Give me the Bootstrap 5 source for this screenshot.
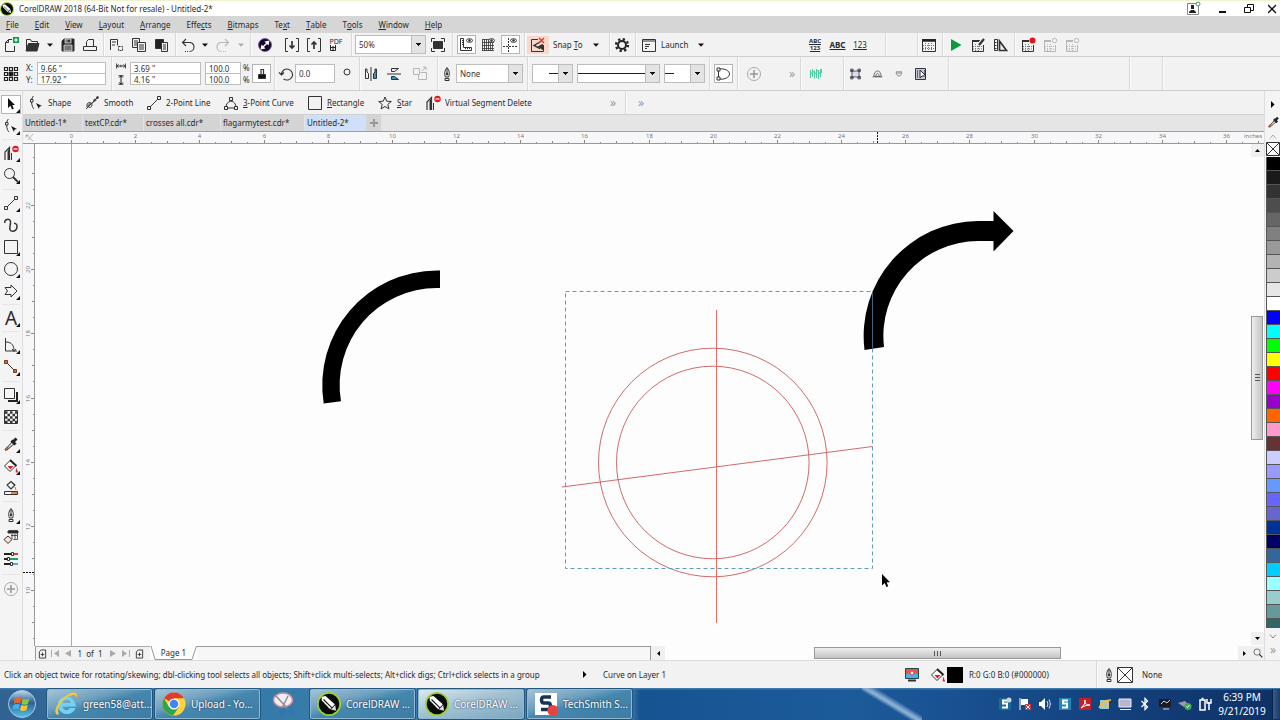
<!DOCTYPE html>
<html lang="en">
<head>
<meta charset="utf-8">
<meta name="viewport" content="width=device-width, initial-scale=1">
<title>CorelDRAW 2018 (64-Bit Not for resale) - Untitled-2*</title>
<link href="https://cdn.jsdelivr.net/npm/bootstrap@5.3.0/dist/css/bootstrap.min.css" rel="stylesheet">
<style>
  :root { --ink:#2a2a2a; --bar:#f2f2f2; --line:#cfcfcf; }
  body { font-family:"Noto Sans","Open Sans",sans-serif; font-size:8px; line-height:12px; color:var(--ink); background:#fdfdfd; overflow:hidden; }
  svg { display:block; flex:none; }
  button, a.menu-link { border:0; background:none; padding:0; margin:0; color:inherit; font-size:inherit; line-height:inherit; text-decoration:none; display:flex; align-items:center; white-space:nowrap; }
  .tool { justify-content:center; height:18px; }
  .off { opacity:.3; }
  .ico { width:16px; height:16px; fill:none; stroke:#333; stroke-width:1; }
  .ico-sm { width:13px; }
  .ico-xs { width:10px; height:10px; }
  .boxed { background:#fff; outline:1px solid #b5b5b5; outline-offset:-1px; width:19px; height:19px; justify-self:center; }
  .divider { width:1px; align-self:stretch; background:#d9d9d9; justify-self:center; box-shadow:1px 0 #fbfbfb; }
  .chev { font-size:12px; line-height:12px; color:#999; }
  .fit { min-width:0; min-height:0; }

  .title-row { height:16px; border-top:1px solid #f0f2cc; background:#fff; gap:5px; }
  .win-btns { gap:16px; padding-right:3px; }
  .win-btns button:last-child { margin-left:-3px; }
  .menu-row { height:17px; background:#d6d6d6; padding-left:6px; gap:16px; }
  .std-bar, .prop-bar, .fav-bar { display:grid; align-items:center; background:var(--bar); border-bottom:1px solid var(--line); }
  .std-bar { height:24px; grid-template-columns:21px 22px 14px 22px 22px 5px 22px 22px 23px 4px 22px 12px 24px 12px 7px 22px 5px 22px 22px 22px 8px 71px 24px 5px 22px 22px 22px 6px 22px 58px 4px 22px 4px 71px 96px 22px 23px 22px 28px 19px 22px 5px 22px 22px 22px 6px 22px 22px 22px 1fr; }
  .prop-bar { height:34px; grid-template-columns:22px 84px 10px 14px 71px 4px 46px 21px 5px 18px 40px 24px 0px 24px 22px 30px 4px 17px 67px 9px 41px 4px 83px 4px 41px 8px 20px 8px 26px 28px 11px 20px 18px 22px 22px 22px 22px 16px 181px 33px 1fr; }
  .fav-bar { height:24px; padding-left:5px; grid-template-columns:56px 62px 77px 84px 70px 48px 185px 10px 10px 22px 1fr; }
  .fav-bar button { gap:4px; }
  .pdf { font-size:7px; line-height:7px; flex-direction:column; }
  .abc-small { font-size:6px; line-height:7px; }
  .snap-off { background:#f6d9cc; }

  .field, .combo { border:1px solid #bdbdbd; background:#fff; border-radius:0; color:#333; padding:0 3px; font-size:8px; line-height:10px; min-width:0; width:100%; display:block; }
  .field { height:12px; }
  .field + .field { margin-top:-1px; }
  .field.tall { height:19px; }
  .scale { width:36px; }
  .pct { padding-left:2px; }
  .pick { position:relative; height:19px; width:100%; }
  .combo { height:19px; appearance:none; }
  .pick::after { content:""; position:absolute; right:0; top:0; width:15px; height:19px; border:1px solid #bdbdbd; background:linear-gradient(#111,#111) 4px 7px/5px 1px no-repeat, linear-gradient(#111,#111) 5px 8px/3px 1px no-repeat, linear-gradient(#111,#111) 6px 9px/1px 1px no-repeat, #e3e3e3; pointer-events:none; }
  .pick .sample { position:absolute; left:1px; right:15px; top:9px; height:1px; background:#222; pointer-events:none; }
  .pick .sample.short-end { left:17px; }
  .pick .sample.short-start { right:31px; }

  .toolbox { width:23px; flex:none; background:#f4f4f4; border-right:1px solid #dedede; display:grid; align-content:start; justify-items:center; padding-top:2px; grid-template-rows:22px 22px 5px 22px 22px 6px repeat(5,22px) 5px 22px 5px 22px 22px 6px 22px 22px 5px 22px 22px 22px 5px 22px 22px 22px 8px 22px; }
  .toolbox hr { margin:0; width:18px; border-top:1px solid #bbb; align-self:center; }
  .toolbox button { position:relative; width:20px; height:19px; justify-content:center; align-self:center; }
  .toolbox .fly::after { content:""; position:absolute; right:1px; bottom:1px; border:2px solid; border-color:transparent #111 #111 transparent; }
  .toolbox .letter { font-size:19px; }

  .doc-tabs { height:17px; background:#e5e5e5; border-bottom:1px solid #6aafe0; display:grid; grid-template-columns:60px 61px 77px 84px 61px 16px 1fr; }
  .doc-tabs button { height:16px; padding-left:2px; background:#d4d4d4; border-right:1px solid #e3e3e3; }
  .doc-tabs .on { background:#cfe0f8; border-color:#cfe0f8; }
  .doc-tabs .add { justify-content:center; padding:0; }
  .h-ruler { height:12px; background:#f7f7f9; border-bottom:1px solid #999; }
  .v-ruler { width:12px; flex:none; background:#f7f7f9; border-right:1px solid #999; }
  .ruler-num { font-size:6px; fill:#777; stroke:none; }
  .artboard { background:#fdfdfd; min-width:0; }
  .v-scroll { width:13px; flex:none; display:grid; grid-template-rows:13px 159fr 124px 193fr 13px; padding-bottom:1px; }
  .v-scroll button, .sq { background:#f0f0f0; justify-content:center; }
  .thumb-v { background:linear-gradient(90deg,#eee,#c4c4c4); border:1px solid #999; margin:0 1px 0 0; }
  .thumb-h { background:linear-gradient(#eee,#c4c4c4); border:1px solid #999; height:12px; margin-top:1px; }
  .bottom-row { height:14px; background:#fdfdfd; display:grid; grid-template-columns:12px 115px 47px 454px 14px 149fr 247px 178fr 13px 13px; }
  .corner { background:#f7f7f9; }
  .page-nav { background:var(--bar); border-top:1px solid #aaa; display:grid; grid-template-columns:12px 14px 12px 32px 14px 12px 14px; align-items:center; justify-items:center; border-left:1px solid #999; }
  .strip { background:#f7f7f7; border-top:1px solid #999; border-right:1px solid #999; }

  .palette { width:16px; flex:none; background:#f4f4f4; border-left:1px solid #ddd; display:flex; flex-direction:column; align-items:stretch; padding:5px 0 0 1px; }
  .palette .swatch { height:14px; border:0 solid #555; border-width:0 0 1px 1px; display:block; }
  .palette .swatch:last-of-type { height:9px; }
  .palette .head { height:17px; justify-content:center; }
  .palette .head.low { height:12px; }
  .palette .foot { height:16px; justify-content:center; }

  .status-row { height:28px; background:var(--bar); border-top:1px solid #dcdcdc; display:grid; align-items:center; grid-template-columns:4px 575px 24px 301px 18px 8px 17px 18px 130px 2px 12px 17px 1fr; }
  .status-row > span { white-space:nowrap; }
  .chip { width:16px; height:16px; background:#000; }

  .task-row { height:32px; font-size:10px; color:#fff; background:linear-gradient(31deg, transparent 42%, #8fb2d4 49%, #7fa6cd 52%, transparent 60%) 862px 0/60px 32px no-repeat, linear-gradient(#3f78ac 0 1px,transparent 2px), linear-gradient(90deg,#316392 0,#347aa8 20%,#4b87ac 49%,#165391 50%,#1c5b9a 66%,#1a5495 72%,#123d77 90%,#0e3065 100%); display:grid; align-items:center; grid-template-columns:47px 105px 3px 105px 50px 105px 3px 106px 3px 105px 1fr 214px 60px 8px; }
  .task { height:30px; padding-left:6px; gap:5px; border:1px solid #8eb8d3; border-radius:2px; background:linear-gradient(165deg,#a5c3d6 0,#6fa0bf 35%,#4687ae 50%,#3c7ca5 100%); text-shadow:0 0 2px #123; box-shadow:0 0 0 1px #23567d; }
  .task.on { background:linear-gradient(165deg,#dce8ef 0,#a3c2d3 45%,#7aa6bf 100%); }
  .task svg { width:24px; height:24px; stroke:none; }
  .tray { display:grid; grid-template-columns:repeat(10,20px) 14px; align-items:center; }
  .tray svg { width:14px; height:14px; stroke:none; }
  .clock { text-align:center; line-height:14px; }
  .show-desk { height:30px; background:linear-gradient(90deg,#3b5c88,#173a6c); border-left:1px solid #0a2248; }
</style>
</head>
<body class="d-flex flex-column vh-100">

<svg width="0" height="0" class="position-absolute" aria-hidden="true">
  <defs>
    <symbol id="corel" viewBox="0 0 24 24"><circle cx="12" cy="12" r="12" fill="#9bd32e"/><circle cx="12" cy="12" r="10.3" fill="#0b0b0b"/><path d="M4.500 4.800l4-.8 9.300 8.200-4.600 5-8.400-8.700z" fill="#fff"/><path d="M18.200 13l.9 5.800-5.200-1.200z" fill="#ddd"/><path d="M6.500 7.500l8.500 8.300" stroke="#111" stroke-width="1.100"/></symbol>
    <symbol id="caret" viewBox="0 0 6 4"><path d="M0 .5h6L3 3.700z" fill="#111"/></symbol>
    <symbol id="new" viewBox="0 0 16 16"><path d="M9 2.500H5.500l-3 3v9h9V9M5.500 2.500v3h-3"/><path d="M10 0h6v6h-6z" fill="#0e9a4a" stroke="none"/><path d="M13 1v4M11 3h4" stroke="#fff"/></symbol>
    <symbol id="open" viewBox="0 0 16 16"><path d="M2.500 13.500v-11h4l1 2h6v3"/><path d="M4.500 6.500h10.500l-2 7.500H2z" fill="#333"/></symbol>
    <symbol id="save" viewBox="0 0 16 16"><path d="M2 4l2-2h10v12H2z" fill="#222"/><path d="M5 2h6v4H5zM4 8h8v6H4z" fill="#777" stroke="#eee" stroke-width=".7"/><path d="M8.500 3h1v2h-1z" fill="#222"/></symbol>
    <symbol id="print" viewBox="0 0 16 16"><path d="M4.500 9V4.500l2-2h5V9M1.500 9.500h13v4h-13z"/></symbol>
    <symbol id="cut" viewBox="0 0 16 16"><path d="M1.500 13V2.500h7v6M3 5h4M3 8h3"/><path d="M9.500 9.500h4v4h-4z" stroke-dasharray="2 1"/></symbol>
    <symbol id="copy" viewBox="0 0 16 16"><path d="M7 10.500H1.500v-9h7V5M3 4h4M3 6h3M3 8h3"/><path d="M6.500 5.500h8v9h-8zM8 8h5M8 10h5M8 12h5"/></symbol>
    <symbol id="paste" viewBox="0 0 16 16"><path d="M1.500 2.500h8v9h-8z" fill="#222"/><path d="M7.500 5.500h6v9h-6z" fill="#eee"/><path d="M9 8h3M9 10h3M9 12h3"/></symbol>
    <symbol id="undo" viewBox="0 0 16 16"><path d="M2.500 5.500h7a4.300 4.300 0 0 1 4.500 4.500c0 2.500-2 4.500-4.500 4.500M6 2L2.500 5.500 6 9" stroke-width="1.100"/><path d="M8 14.500H4" stroke-dasharray="1 1"/></symbol>
    <symbol id="redo" viewBox="0 0 16 16"><path d="M13.500 5.500h-7A4.300 4.300 0 0 0 2 10c0 2.500 2 4.500 4.500 4.500M10 2l3.500 3.500L10 9" stroke-width="1.100"/><path d="M8 14.500h4" stroke-dasharray="1 1"/></symbol>
    <symbol id="connect" viewBox="0 0 16 16"><circle cx="8" cy="8" r="6.500" fill="#150b28" stroke="#7a4bb0" stroke-width=".8"/><path d="M12.500 3.500l-1 5-4-4zM3.500 12.500l1-5 4 4z" fill="#fff" stroke="none"/><path d="M5.500 10.500l5-5" stroke="#fff" stroke-width="1.500"/></symbol>
    <symbol id="import" viewBox="0 0 16 16"><path d="M4 1.500H1.500v13H4M12 1.500h2.500v13H12"/><path d="M8 4v7M5.500 8.500L8 11l2.500-2.500" stroke-width="1.700"/></symbol>
    <symbol id="export" viewBox="0 0 16 16"><path d="M4 1.500H1.500v13H4M12 1.500h2.500v13H12"/><path d="M8 12V5M5.500 7.500L8 5l2.500 2.500" stroke-width="1.700"/></symbol>
    <symbol id="full" viewBox="0 0 16 16"><path d="M3.500 4.500h9v7h-9z" fill="#333"/><path d="M1.500 5V1.500H5M11 1.500h3.500V5M14.500 11v3.500H11M5 14.500H1.500V11"/></symbol>
    <symbol id="eye" viewBox="0 0 16 16"><ellipse cx="11.500" cy="3.500" rx="3" ry="1.800" fill="#fff"/><circle cx="11.500" cy="3.500" r=".8" fill="#333"/></symbol>
    <symbol id="rulers" viewBox="0 0 16 16"><path d="M2.500 1.500h3v9h8v3h-11zM4 3.500h1M4 5.500h1M4 7.500h1M7.500 11v1M9.500 11v1M11.500 11v1"/><use href="#eye"/></symbol>
    <symbol id="grid" viewBox="0 0 16 16"><path d="M2.500 2v12M4.500 2v12M6.500 2v12M8.500 2v12M10.500 2v12M12.500 2v12M14 2.500H2M14 5.500H2M14 8.500H2M14 11.500H2M14 13.500H2" stroke-width=".8"/><use href="#eye"/></symbol>
    <symbol id="guides" viewBox="0 0 16 16"><path d="M6.500 1v14M1 9.500h14" stroke-dasharray="2 1"/><use href="#eye"/></symbol>
    <symbol id="snapoff" viewBox="0 0 16 16"><path d="M8 2.500H1.500v12h12V8" /><path d="M10 5L4 8.500l6 3" stroke-width="1.400"/><path d="M12.500 7.500v5l-4-3z" fill="#333"/><path d="M9 1l5 5M14 1L9 6" stroke="#e0342b" stroke-width="1.400"/></symbol>
    <symbol id="gear" viewBox="0 0 16 16"><circle cx="8" cy="8" r="4" stroke="#222" stroke-width="2"/><circle cx="8" cy="8" r="6" stroke="#222" stroke-width="2.200" stroke-dasharray="2.300 2.410"/></symbol>
    <symbol id="launch" viewBox="0 0 16 16"><path d="M1.500 2.500h13v12h-13zM1.500 4h13M4 7.500h5M4 9.500h4M4 11.500h2"/></symbol>
    <symbol id="table" viewBox="0 0 16 16"><path d="M1.500 2.500h13v12h-13z"/><path d="M1 3.500h14" stroke-width="2.500" stroke="#222"/><path d="M4.500 6v8M7.500 6v8M10.500 6v8M2 8.500h12M2 11.500h12" stroke="#777" stroke-dasharray="1 1"/></symbol>
    <symbol id="play" viewBox="0 0 16 16"><path d="M3 2l10.500 6L3 14z" fill="#0a9b3f" stroke="none"/></symbol>
    <symbol id="script" viewBox="0 0 16 16"><path d="M10 3.500H2.500v11h11V8"/><path d="M2 4h7" stroke-width="2"/><path d="M9 8l5-6" stroke-width="2.200"/><path d="M5.500 7v7M8.500 9v5M3 9.500h10M3 12h10" stroke="#777" stroke-dasharray="1 1"/></symbol>
    <symbol id="angle" viewBox="0 0 16 16"><path d="M2.500 2.500h3v11h-3zM3 5.500h1.500M3 8.500h1.500M3 11.500h1.500"/><path d="M7.500 4v9.500h7z" stroke-width="1.700"/></symbol>
    <symbol id="rec" viewBox="0 0 16 16"><path d="M9 3.500H2.500v11h11V8"/><path d="M2 4h7" stroke-width="2"/><path d="M5.500 7v7M8.500 7v7M3 9.500h10M3 12h10" stroke="#777" stroke-dasharray="1 1"/><circle cx="12.500" cy="3.500" r="3" fill="#e9101a" stroke="none"/></symbol>
    <symbol id="rec2" viewBox="0 0 16 16"><path d="M9 3.500H2.500v11h11V8"/><path d="M2 4h7" stroke-width="2"/><path d="M5.500 7v7M8.500 7v7M3 9.500h10M3 12h10" stroke-dasharray="1 1"/><circle cx="12.500" cy="3.500" r="2.200"/></symbol>
    <symbol id="anchor" viewBox="0 0 16 16"><path d="M1.500 1.500h3v3h-3zM6.500 1.500h3v3h-3zM11.500 1.500h3v3h-3zM1.500 6.500h3v3h-3zM11.500 6.500h3v3h-3zM1.500 11.500h3v3h-3zM6.500 11.500h3v3h-3zM11.500 11.500h3v3h-3z" stroke="#222" stroke-width="1.200"/><path d="M6 6h4v4H6z" fill="#111"/></symbol>
    <symbol id="width" viewBox="0 0 12 8"><path d="M.5 1v6M11.500 1v6M1 4h10M3 2L1 4l2 2M9 2l2 2-2 2M6 2.500v3" stroke="#222"/></symbol>
    <symbol id="height" viewBox="0 0 12 12"><path d="M3 1h6M3 11h6M6 1v10M4 3l2-2 2 2M4 9l2 2 2-2" stroke="#222" stroke-width="1.200"/></symbol>
    <symbol id="lock" viewBox="0 0 16 16"><path d="M7 8V3.500h2.500V8" stroke-width="1.200"/><path d="M4.500 8.500h7v4h-7z" fill="#111"/></symbol>
    <symbol id="rotate" viewBox="0 0 16 16"><path d="M3.500 8.500a5.500 5.500 0 1 1 2 4.300M1 6.500l2.500 2.500L6 6.500" stroke-width="1.100"/></symbol>
    <symbol id="mirror" viewBox="0 0 16 16"><path d="M2.500 3v9.500h3v-5l-1.500-1.500V3zM8 1v14"/><path d="M13.500 3v9.500h-3v-5l1.500-1.500V3z" fill="#2f93bf"/></symbol>
    <symbol id="flip" viewBox="0 0 16 16"><path d="M12.500 2.500H5.500v3h3zM1 8h14"/><path d="M12.500 13.500H5.500v-3h3z" fill="#2f93bf"/></symbol>
    <symbol id="order" viewBox="0 0 16 16"><path d="M1.500 2.500h6v6h-6zM6.500 8.500v5h8v-7h-6M10 5l4-4M11 1h3v3"/></symbol>
    <symbol id="pen" viewBox="0 0 16 16"><path d="M8 1.500C5.500 5 5 7.500 6.500 11h3C11 7.500 10.500 5 8 1.500zM6 12.500h4v2H6zM8 2v6"/><circle cx="8" cy="8" r="1" fill="#333"/></symbol>
    <symbol id="closed" viewBox="0 0 16 16"><path d="M3.500 3v10M3.500 3C10 2 14.500 5 14.500 8S10 14 3.500 13"/><path d="M2 2h3v3H2zM2 11h3v3H2z" fill="#fff"/></symbol>
    <symbol id="plus" viewBox="0 0 16 16"><circle cx="8" cy="8" r="6.500" stroke="#aaa"/><path d="M8 4v8M4 8h8" stroke="#999" stroke-width="1.600"/></symbol>
    <symbol id="scribble" viewBox="0 0 16 16"><path d="M2.500 4v8M4.500 3v8M6.500 4.500v8M8.500 3v9M10.500 5v8M12.500 3v8M13.500 3v4M2 9l3-4 2 3 3-4 2 4" stroke="#4fcda2" stroke-width="1"/></symbol>
    <symbol id="env" viewBox="0 0 16 16"><path d="M3 3c3 2 6 2 10 0-1 4-1 6 0 10-4-2-7-2-10 0 1-4 1-6 0-10z" fill="#dde" stroke="#334"/><path d="M2 2h3v3H2zM11 2h3v3h-3zM2 11h3v3H2zM11 11h3v3h-3z" stroke="#334"/></symbol>
    <symbol id="bell" viewBox="0 0 16 16"><path d="M3.500 11c0-9 9-9 9 0zM6 11c0-5 4-5 4 0M2 11.500h12" stroke="#555"/></symbol>
    <symbol id="cup" viewBox="0 0 16 16"><path d="M3.500 4.500h9c0 9-9 9-9 0M5 6.500h6" stroke="#555"/></symbol>
    <symbol id="pasteobj" viewBox="0 0 16 16"><path d="M2.500 2.500h10v11h-10z" fill="#c6c8d6" stroke="#334"/><path d="M7 4v8l2-2h4z" fill="#fff" stroke="#223"/><path d="M4.500 4v8M11.500 4v4" stroke="#667"/></symbol>
    <symbol id="arrowcur" viewBox="0 0 16 16"><path d="M5 2v10l2.500-2.300L9 13.500l1.800-.8L9.300 9H12z" fill="#111" stroke="none"/></symbol>
    <symbol id="shape" viewBox="0 0 16 16"><path d="M5.500 1C3 3 3.500 8 4 10s1 3 2 4"/><path d="M2.500 4.500h2.500v2.500h-2.500z" fill="#fff"/><path d="M8 8l6 3-2.500.6L11 14z" fill="#111" stroke="none"/></symbol>
    <symbol id="smooth" viewBox="0 0 16 16"><path d="M2 14L14 2M3 12c-1-6 5-5 5-2s-4 3-4 1c0-3 7-2 6-6"/><circle cx="13.500" cy="2.500" r="1"/><circle cx="11" cy="5" r="1"/></symbol>
    <symbol id="line" viewBox="0 0 16 16"><path d="M3 13L13 3"/><path d="M1.500 11.500h3v3h-3zM11.500 1.500h3v3h-3z" fill="#eee"/></symbol>
    <symbol id="curve3" viewBox="0 0 16 16"><path d="M3 13C3 4 13 4 13 13M3 13h10"/><path d="M6.500 2.500h3v3h-3zM1.500 11.500h3v3h-3zM11.500 11.500h3v3h-3z" fill="#eee"/></symbol>
    <symbol id="rect" viewBox="0 0 16 16"><path d="M1.500 1.500h13v13h-13z"/></symbol>
    <symbol id="star" viewBox="0 0 16 16"><path d="M8 2l1.700 4.200 4.600.3-3.500 2.900 1.100 4.500L8 11.500l-3.900 2.400 1.100-4.500L1.700 6.500l4.600-.3z"/></symbol>
    <symbol id="vsd" viewBox="0 0 16 16"><path d="M2 15V7l4.500-4.500V15" stroke-width="1.200"/><path d="M4.500 6L7 3v12H4.500z" fill="#333" stroke="none"/><path d="M8.500 8v7"/><circle cx="12.500" cy="4" r="3.200" fill="#e01b22" stroke="none"/><path d="M10.500 4h4" stroke="#fff" stroke-width="1.200"/></symbol>
    <symbol id="zoom" viewBox="0 0 16 16"><circle cx="6.500" cy="6.500" r="5"/><path d="M10 10l5 5" stroke-width="1.800"/></symbol>
    <symbol id="free" viewBox="0 0 16 16"><path d="M2 6C.500 2.500 7 .500 7.500 4.500 8 8 4.500 14 9.500 14.200c5.500 0 6-8.200 1.500-8" stroke-width="1.500"/></symbol>
    <symbol id="ellipse" viewBox="0 0 16 16"><circle cx="8" cy="8" r="6.500"/></symbol>
    <symbol id="arrowshape" viewBox="0 0 16 16"><path d="M2 4.500h6V2l6 6-6 6v-2.500H2L4.500 8z"/></symbol>
    <symbol id="dim" viewBox="0 0 16 16"><path d="M2.500 1v13H14M3 5c6 0 8 4 8 9M9 12l2 2.500 2-2.500"/></symbol>
    <symbol id="conn" viewBox="0 0 16 16"><path d="M3 3l10 10"/><path d="M1.500 1.500h3v3h-3zM10.500 10.500h3v3h-3z" fill="#c96f36" stroke="#7b3b15"/></symbol>
    <symbol id="shadow" viewBox="0 0 16 16"><path d="M14 5v9H5" stroke-width="2" stroke="#222"/><path d="M1.500 1.500h10v10h-10z" fill="#f6f6f6"/></symbol>
    <symbol id="checker" viewBox="0 0 16 16"><path d="M1.500 1.500h13v13h-13z"/><path d="M2 3.500h12M2 8.500h12M2 13h12" stroke-width="2.500" stroke-dasharray="2.500 2.500"/><path d="M4.500 6h10M4.500 11h10" stroke-width="2.500" stroke-dasharray="2.500 2.500"/></symbol>
    <symbol id="dropper" viewBox="0 0 16 16"><path d="M2 14l7-8 2 2-7 6z" fill="#ddd"/><path d="M2 14l3-3" stroke="#b65a2a" stroke-width="2"/><path d="M8.500 4.500l4 4M10 6l3.500-3.500" stroke="#222" stroke-width="3"/></symbol>
    <symbol id="bucket" viewBox="0 0 16 16"><path d="M7 2.500l6 5-6 6-5.500-5.500z" fill="#fff"/><path d="M7 2l6.500 6" stroke="#222" stroke-width="2"/><path d="M4.500 8h6L7.300 11.500zM13 9.500l2.300 5h-2.600z" fill="#e0242e" stroke="none"/></symbol>
    <symbol id="smartfill" viewBox="0 0 16 16"><path d="M8 1.500l4 3.500-4 4-4-4zM9 2.500l3 3" stroke-width="1.100"/><path d="M1.500 11.500h13v3h-13z"/><path d="M8 12h6v2H8z" fill="#e08a4e" stroke="none"/><path d="M12 7l1 3" stroke="#d66"/></symbol>
    <symbol id="mesh" viewBox="0 0 16 16"><path d="M5.500 1.500h9v9h-4M9 5v5M12 5v5M8 6.500h6" stroke-width=".8"/><path d="M5 2h10v2H5z" fill="#222"/><path d="M5 7l4 3.500-4 4-4-4z" fill="#f4e6da"/></symbol>
    <symbol id="sliders" viewBox="0 0 16 16"><path d="M1 3h7M1 8h3M1 13h6" stroke-width="1.800" stroke="#222"/><path d="M11 3h4" stroke="#d23" stroke-width="1.800"/><path d="M7 8h8" stroke="#19914a" stroke-width="1.800"/><path d="M10 13h5" stroke="#38a4e0" stroke-width="1.800"/><path d="M8.500 1.500h2v3h-2zM4.500 6.500h2v3h-2zM7.500 11.500h2v3h-2z" fill="#fff"/></symbol>
    <symbol id="addpage" viewBox="0 0 10 10"><path d="M3.500.5h5v9h-7v-7zM3 5.500h4M5 3.500v4"/></symbol>
    <symbol id="xbox" viewBox="0 0 16 16"><path d="M.5.5h15v15H.5z" fill="#fff"/><path d="M1 1l14 14M15 1L1 15"/></symbol>
    <symbol id="screen" viewBox="0 0 16 16"><path d="M1.500 1.500h13v10h-13z" fill="#e2574c" stroke="#245"/><path d="M2 7h12v4H2z" fill="#49b3e6" stroke="none"/><circle cx="8" cy="6" r="2" fill="#fff" stroke="#e8443d"/><path d="M4 13.500h8" stroke-width="2"/></symbol>
    <linearGradient id="orb" x2="0" y2="1"><stop stop-color="#c3d9e8"/><stop offset=".45" stop-color="#2a5f90"/><stop offset="1" stop-color="#57c3ee"/></linearGradient>
  </defs>
</svg>

<header class="title-row d-flex align-items-center">
  <svg width="14" height="14" viewBox="0 0 24 24"><use href="#corel"/></svg>
  <span class="flex-fill">CorelDRAW 2018 (64-Bit Not for resale) - Untitled-2*</span>
  <div class="win-btns d-flex align-items-center">
    <button aria-label="Account"><svg class="ico" width="12" height="12" viewBox="0 0 16 16"><path d="M1.500 2.500h11v11h-11z" stroke="#888"/><path d="M5 4h3v4H5zM3 12v-1l2-2h3l2 2v1z" fill="#222" stroke="none"/><circle cx="12" cy="3" r="2" stroke="#3a9a7c" fill="#fff"/></svg></button>
    <button aria-label="Minimize"><svg width="10" height="12" stroke="#111" fill="none"><path d="M1 9h7" stroke-width="2"/></svg></button>
    <button aria-label="Restore"><svg width="11" height="12" stroke="#111" fill="none"><path d="M3.500 4V1.500h6v6H7M.5 4.500h6v5h-6z"/></svg></button>
    <button aria-label="Close"><svg width="9" height="12" stroke="#111" stroke-width="1.400" fill="none"><path d="M0 2l8 8M8 2L0 10"/></svg></button>
  </div>
</header>

<nav class="menu-row d-flex align-items-center">
  <a class="menu-link" href="#"><u>F</u>ile</a><a class="menu-link" href="#"><u>E</u>dit</a><a class="menu-link" href="#"><u>V</u>iew</a><a class="menu-link" href="#"><u>L</u>ayout</a><a class="menu-link" href="#"><u>A</u>rrange</a><a class="menu-link" href="#">Effe<u>c</u>ts</a><a class="menu-link" href="#"><u>B</u>itmaps</a><a class="menu-link" href="#">Te<u>x</u>t</a><a class="menu-link" href="#"><u>T</u>able</a><a class="menu-link" href="#">T<u>o</u>ols</a><a class="menu-link" href="#"><u>W</u>indow</a><a class="menu-link" href="#"><u>H</u>elp</a>
</nav>

<div class="std-bar" role="toolbar" aria-label="Standard">
  <button class="tool" aria-label="New"><svg class="ico"><use href="#new"/></svg></button>
  <button class="tool" aria-label="Open"><svg class="ico"><use href="#open"/></svg></button>
  <button class="tool" aria-label="Recent"><svg width="6" height="4"><use href="#caret"/></svg></button>
  <button class="tool" aria-label="Save"><svg class="ico"><use href="#save"/></svg></button>
  <button class="tool" aria-label="Print"><svg class="ico"><use href="#print"/></svg></button>
  <i class="divider"></i>
  <button class="tool" aria-label="Cut"><svg class="ico"><use href="#cut"/></svg></button>
  <button class="tool" aria-label="Copy"><svg class="ico"><use href="#copy"/></svg></button>
  <button class="tool" aria-label="Paste"><svg class="ico"><use href="#paste"/></svg></button>
  <i class="divider"></i>
  <button class="tool" aria-label="Undo"><svg class="ico"><use href="#undo"/></svg></button>
  <button class="tool" aria-label="Undo list"><svg width="6" height="4"><use href="#caret"/></svg></button>
  <button class="tool off" aria-label="Redo"><svg class="ico"><use href="#redo"/></svg></button>
  <button class="tool off" aria-label="Redo list"><svg width="6" height="4"><use href="#caret"/></svg></button>
  <i class="divider"></i>
  <button class="tool" aria-label="Content"><svg class="ico"><use href="#connect"/></svg></button>
  <i></i>
  <button class="tool" aria-label="Import"><svg class="ico"><use href="#import"/></svg></button>
  <button class="tool" aria-label="Export"><svg class="ico"><use href="#export"/></svg></button>
  <button class="tool pdf">PDF<svg width="12" height="6" fill="none" stroke="#222"><path d="M.5 0v5.500h5V0M1 2.500h4M3 1v4"/></svg></button>
  <i class="divider"></i>
  <div class="pick"><select class="combo" aria-label="Zoom level"><option>50%</option></select></div>
  <button class="tool" aria-label="Full screen"><svg class="ico"><use href="#full"/></svg></button>
  <i class="divider"></i>
  <button class="tool boxed" aria-label="Show rulers"><svg class="ico"><use href="#rulers"/></svg></button>
  <button class="tool" aria-label="Show grid"><svg class="ico"><use href="#grid"/></svg></button>
  <button class="tool boxed" aria-label="Show guidelines"><svg class="ico"><use href="#guides"/></svg></button>
  <i class="divider"></i>
  <button class="tool snap-off" aria-label="Snap off"><svg class="ico"><use href="#snapoff"/></svg></button>
  <button class="ps-1 pe-2 justify-content-between"><span>Snap <u>T</u>o</span><svg width="6" height="4"><use href="#caret"/></svg></button>
  <i class="divider"></i>
  <button class="tool" aria-label="Options"><svg class="ico"><use href="#gear"/></svg></button>
  <i class="divider"></i>
  <button class="ps-1 pe-1"><svg class="ico"><use href="#launch"/></svg><span class="ps-1 flex-fill text-start">Launch</span><svg width="6" height="4"><use href="#caret"/></svg></button>
  <i></i>
  <button class="tool abc-small text-decoration-underline fw-bold">ABC<br>123</button>
  <button class="tool text-decoration-underline fw-bold">ABC</button>
  <button class="tool text-decoration-underline">123</button>
  <i class="divider"></i>
  <i class="divider ms-auto"></i>
  <button class="tool" aria-label="Table"><svg class="ico"><use href="#table"/></svg></button>
  <i class="divider"></i>
  <button class="tool" aria-label="Run"><svg class="ico"><use href="#play"/></svg></button>
  <button class="tool" aria-label="Script editor"><svg class="ico"><use href="#script"/></svg></button>
  <button class="tool" aria-label="Design mode"><svg class="ico"><use href="#angle"/></svg></button>
  <i class="divider"></i>
  <button class="tool" aria-label="Record"><svg class="ico"><use href="#rec"/></svg></button>
  <button class="tool off" aria-label="Pause"><svg class="ico"><use href="#rec2"/></svg></button>
  <button class="tool off" aria-label="Stop"><svg class="ico"><use href="#rec2"/></svg></button>
</div>

<div class="prop-bar" role="toolbar" aria-label="Property bar">
  <button class="tool" aria-label="Object origin"><svg class="ico"><use href="#anchor"/></svg></button>
  <div class="d-flex align-items-center"><div class="ps-1 pe-1"><label class="d-block" for="px">X:</label><label class="d-block" for="py">Y:</label></div><div class="flex-fill"><input class="field" id="px" value='9.66 "'><input class="field" id="py" value='17.92 "'></div></div>
  <i class="divider"></i>
  <div><svg width="10" height="8" fill="none"><use href="#width"/></svg><svg class="mt-1" width="10" height="12" fill="none"><use href="#height"/></svg></div>
  <div><input class="field" aria-label="Width" value='3.69 "'><input class="field" aria-label="Height" value='4.16 "'></div>
  <i></i>
  <div class="d-flex align-items-center"><div class="scale"><input class="field" id="sx" value="100.0"><input class="field" id="sy" value="100.0"></div><div class="pct"><label class="d-block" for="sx">%</label><label class="d-block" for="sy">%</label></div></div>
  <button class="tool boxed" aria-label="Lock ratio"><svg class="ico"><use href="#lock"/></svg></button>
  <i class="divider"></i>
  <button class="tool" aria-label="Rotation"><svg class="ico"><use href="#rotate"/></svg></button>
  <input class="field tall" aria-label="Angle" value="0.0">
  <span><svg class="mx-auto mb-1" width="8" height="8" fill="none" stroke="#333"><circle cx="4" cy="4" r="3"/></svg></span>
  <i class="divider"></i>
  <button class="tool" aria-label="Mirror horizontally"><svg class="ico"><use href="#mirror"/></svg></button>
  <button class="tool" aria-label="Mirror vertically"><svg class="ico"><use href="#flip"/></svg></button>
  <button class="tool off" aria-label="Order"><svg class="ico"><use href="#order"/></svg></button>
  <i class="divider"></i>
  <svg class="ico"><use href="#pen"/></svg>
  <div class="pick"><select class="combo" aria-label="Outline width"><option>None</option></select></div>
  <i class="divider"></i>
  <div class="pick"><select class="combo" aria-label="Start arrowhead"></select><span class="sample short-end"></span></div>
  <i></i>
  <div class="pick"><select class="combo" aria-label="Line style"></select><span class="sample"></span></div>
  <i></i>
  <div class="pick"><select class="combo" aria-label="End arrowhead"></select><span class="sample short-start"></span></div>
  <i class="divider"></i>
  <button class="tool boxed" aria-label="Close curve"><svg class="ico"><use href="#closed"/></svg></button>
  <i class="divider"></i>
  <button class="tool" aria-label="Customize"><svg class="ico"><use href="#plus"/></svg></button>
  <span class="text-end chev">»</span>
  <i class="divider"></i>
  <button class="tool" aria-label="Scribble"><svg class="ico"><use href="#scribble"/></svg></button>
  <i class="divider ms-auto"></i>
  <button class="tool" aria-label="Envelope"><svg class="ico ico-sm"><use href="#env"/></svg></button>
  <button class="tool" aria-label="Bell"><svg class="ico ico-sm"><use href="#bell"/></svg></button>
  <button class="tool" aria-label="Cup"><svg class="ico ico-xs"><use href="#cup"/></svg></button>
  <button class="tool" aria-label="Paste inside"><svg class="ico"><use href="#pasteobj"/></svg></button>
  <i></i>
  <i class="divider me-auto"></i>
  <i class="divider me-auto"></i>
  <i class="divider me-auto"></i>
</div>

<div class="flex-fill d-flex fit">
  <aside class="toolbox" role="toolbar" aria-label="Toolbox">
    <button class="boxed fly" aria-label="Pick"><svg class="ico"><use href="#arrowcur"/></svg></button>
    <button class="fly" aria-label="Shape tool"><svg class="ico"><use href="#shape"/></svg></button>
    <hr>
    <button class="fly" aria-label="Segment delete"><svg class="ico"><use href="#vsd"/></svg></button>
    <button class="fly" aria-label="Zoom"><svg class="ico"><use href="#zoom"/></svg></button>
    <hr>
    <button class="fly" aria-label="Line"><svg class="ico"><use href="#line"/></svg></button>
    <button aria-label="Freehand"><svg class="ico"><use href="#free"/></svg></button>
    <button class="fly" aria-label="Rectangle tool"><svg class="ico"><use href="#rect"/></svg></button>
    <button class="fly" aria-label="Ellipse"><svg class="ico"><use href="#ellipse"/></svg></button>
    <button class="fly" aria-label="Polygon"><svg class="ico"><use href="#arrowshape"/></svg></button>
    <hr>
    <button class="fly letter">A</button>
    <hr>
    <button class="fly" aria-label="Dimension"><svg class="ico"><use href="#dim"/></svg></button>
    <button class="fly" aria-label="Connector"><svg class="ico"><use href="#conn"/></svg></button>
    <hr>
    <button class="fly" aria-label="Shadow"><svg class="ico"><use href="#shadow"/></svg></button>
    <button aria-label="Transparency"><svg class="ico"><use href="#checker"/></svg></button>
    <hr>
    <button class="fly" aria-label="Eyedropper"><svg class="ico"><use href="#dropper"/></svg></button>
    <button class="fly" aria-label="Fill"><svg class="ico"><use href="#bucket"/></svg></button>
    <button aria-label="Smart fill"><svg class="ico"><use href="#smartfill"/></svg></button>
    <hr>
    <button class="fly" aria-label="Outline"><svg class="ico"><use href="#pen"/></svg></button>
    <button aria-label="Mesh fill"><svg class="ico"><use href="#mesh"/></svg></button>
    <button aria-label="Color sliders"><svg class="ico"><use href="#sliders"/></svg></button>
    <hr>
    <button aria-label="Add tool"><svg class="ico"><use href="#plus"/></svg></button>
  </aside>

  <main class="flex-fill d-flex flex-column fit">
    <div class="fav-bar" role="toolbar" aria-label="Favorites">
      <button><svg class="ico"><use href="#shape"/></svg>Shape</button>
      <button><svg class="ico"><use href="#smooth"/></svg>Smooth</button>
      <button><svg class="ico"><use href="#line"/></svg>2-Point Line</button>
      <button><svg class="ico"><use href="#curve3"/></svg><span><u>3</u>-Point Curve</span></button>
      <button><svg class="ico"><use href="#rect"/></svg><span><u>R</u>ectangle</span></button>
      <button><svg class="ico"><use href="#star"/></svg><span><u>S</u>tar</span></button>
      <button><svg class="ico"><use href="#vsd"/></svg>Virtual Segment Delete</button>
      <span class="chev">»</span><i class="divider"></i><span class="chev text-center">»</span>
    </div>
    <div class="doc-tabs">
      <button>Untitled-1*</button><button>textCP.cdr*</button><button>crosses all.cdr*</button><button>flagarmytest.cdr*</button><button class="on">Untitled-2*</button><button class="add" aria-label="New document"><svg width="8" height="8" stroke="#999" stroke-width="2"><path d="M4 0v8M0 4h8"/></svg></button>
    </div>
    <div class="h-ruler"><svg id="hr" width="100%" height="11" fill="none" stroke="#888"><path d="M3 3l7 6M3 3h3M3 3v3M10 2L5 8" stroke-width=".6"/></svg></div>
    <div class="flex-fill d-flex fit">
      <div class="v-ruler"><svg id="vr" width="11" height="100%" fill="none" stroke="#888"></svg></div>
      <div class="artboard flex-fill">
        <svg width="100%" height="100%" fill="none" role="img" aria-label="Drawing">
          <g transform="translate(-35 -144)">
            <path d="M71.500 144V646" stroke="#aaa"/>
            <path d="M440 270.500H437A114.800 114.800 0 0 0 323.700 403.500L341 401.300A97 97 0 0 1 437 288H440z" fill="#000"/>
            <path d="M993.500 221H978A115 115 0 0 0 864.500 350L884 347A95 95 0 0 1 978 241H993.500V251.500L1013.500 231 993.500 211z" fill="#000"/>
            <g stroke="#cb5a5a" stroke-width=".9"><circle cx="712.800" cy="462.500" r="114.300"/><circle cx="712.800" cy="462.500" r="96.300"/><path d="M562 487L872.500 446.500"/></g>
            <path d="M716.500 310V623" stroke="#ee6a62"/>
            <path d="M565.500 291.500H872.500V568.500H565.500z" stroke="#5d9cbd" stroke-dasharray="4 3"/>
            <path d="M872.500 292V348" stroke="#41617a"/>
            <path d="M882 574v11.500l2.700-2.500 1.700 4 1.900-.8-1.700-3.900h3.400z" fill="#000"/>
          </g>
        </svg>
      </div>
      <div class="v-scroll"><button aria-label="Scroll up"><svg width="5" height="3"><path d="M0 3h5L2.500 0z"/></svg></button><i></i><div class="thumb-v d-flex align-items-center justify-content-center"><svg width="5" height="7" stroke="#555"><path d="M0 .5h5M0 3.500h5M0 6.500h5"/></svg></div><i></i><button aria-label="Scroll down"><svg width="5" height="3"><path d="M0 0h5L2.500 3z"/></svg></button></div>
    </div>
    <div class="bottom-row">
      <i class="corner"></i>
      <div class="page-nav">
        <button aria-label="Add page before"><svg width="9" height="10" stroke="#333" fill="none"><use href="#addpage"/></svg></button>
        <button aria-label="First page"><svg width="8" height="7" fill="#aaa"><path d="M0 0h1v7H0zM8 0v7L3 3.500z"/></svg></button>
        <button aria-label="Previous page"><svg width="6" height="7" fill="#aaa"><path d="M6 0v7L0 3.500z"/></svg></button>
        <span>1&nbsp; of &nbsp;1</span>
        <button aria-label="Next page"><svg width="6" height="7" fill="#aaa"><path d="M0 0v7l6-3.500z"/></svg></button>
        <button aria-label="Last page"><svg width="8" height="7" fill="#aaa"><path d="M7 0h1v7H7zM0 0v7l5-3.500z"/></svg></button>
        <button aria-label="Add page after"><svg width="9" height="10" stroke="#333" fill="none"><use href="#addpage"/></svg></button>
      </div>
      <button class="position-relative justify-content-center"><svg class="position-absolute top-0 start-0" width="47" height="14" stroke="#999" fill="#fdfdfd"><path d="M1 0l4 13.500h37L46.500 0"/></svg><span class="position-relative">Page 1</span></button>
      <div class="strip"></div>
      <button class="sq" aria-label="Scroll left"><svg width="3" height="5"><path d="M3 0v5L0 2.500z"/></svg></button>
      <i></i><div class="thumb-h d-flex align-items-center justify-content-center"><svg width="7" height="5" stroke="#555"><path d="M.5 0v5M3.500 0v5M6.500 0v5"/></svg></div><i></i>
      <button class="sq" aria-label="Scroll right"><svg width="3" height="5"><path d="M0 0v5l3-2.500z"/></svg></button>
      <button class="sq" aria-label="Navigator"><svg class="ico ico-xs"><use href="#zoom"/></svg></button>
    </div>
  </main>

  <aside class="palette" aria-label="Color palette">
    <button class="head" aria-label="Palette menu"><svg width="4" height="7"><path d="M0 0v7l3.500-3.500z"/></svg></button>
    <button class="head" aria-label="Sample color"><svg class="ico ico-sm"><use href="#dropper"/></svg></button>
    <button class="head low" aria-label="Previous colors"><svg width="8" height="5" stroke="#aaa" fill="none"><path d="M1 4.500L4 1l3 3.500"/></svg></button>
    <button aria-label="No color"><svg width="14" height="15" stroke="#333" fill="#fff"><path d="M.5.500h13v13H.5zM1 1l12 12M13 1L1 13"/></svg></button>
    <div id="swatches"></div>
    <button class="foot" aria-label="More colors"><svg width="8" height="5" stroke="#888" fill="none"><path d="M1 .5L4 4 7 .5"/></svg></button>
    <button class="justify-content-center chev" aria-label="Expand">»</button>
  </aside>
</div>

<footer class="status-row">
  <i></i>
  <span>Click an object twice for rotating/skewing; dbl-clicking tool selects all objects; Shift+click multi-selects; Alt+click digs; Ctrl+click selects in a group</span>
  <svg class="ms-1" width="4" height="7"><path d="M0 0v7l3.500-3.500z"/></svg>
  <span>Curve on Layer 1</span>
  <svg class="ico"><use href="#screen"/></svg>
  <i></i><svg class="ico"><use href="#bucket"/></svg>
  <div class="chip"></div>
  <span class="ps-1">R:0 G:0 B:0 (#000000)</span>
  <i class="divider"></i>
  <svg class="ico ms-1"><use href="#pen"/></svg>
  <svg class="ico ms-2"><use href="#xbox"/></svg>
  <span class="ps-3">None</span>
</footer>

<div class="task-row">
  <button class="justify-content-center pe-1" aria-label="Start"><svg width="30" height="30" viewBox="0 0 30 30"><circle cx="15" cy="15" r="13.500" fill="url(#orb)" stroke="#a9c9df"/><path d="M8 10q3.500-2.500 6.500-.8L13 14.500q-3-1.500-6.300.5z" fill="#f0622b"/><path d="M15.800 9.700q3 1.500 6.500-.3L21 14.700q-3.500 1.800-6.500.3z" fill="#8dc63f"/><path d="M6.500 16q3.300-2 6.300-.4l-1.300 5q-3-1.400-6-.2z" fill="#45b1ea"/><path d="M14.200 16q3 1.500 6.500-.3l-1.300 5.200q-3.500 1.800-6.400.3z" fill="#fdc52c"/></svg></button>
  <button class="task"><svg viewBox="0 0 24 24"><path d="M22 14.500H8.500c.5 4.500 6 4.500 7.500 1.500h5.500C18.500 25 4.500 24 4 13S20.500 1 22 14.500zM8.500 11h8.500c-.5-4.500-8-4.500-8.500 0z" fill="#6fd3f8"/><path d="M4 23C-3 21 5 6 16 1.500c6-2.500 8 0 6.500 4.500 0-4-3-3.500-7-2C9 6.500 1 18 5 21.500z" fill="#f5c92f"/></svg>green58@att...</button>
  <i></i>
  <button class="task"><svg viewBox="0 0 24 24"><circle cx="12" cy="12" r="11.500" fill="#ffd33c"/><path d="M12 12L2 6.300A11.500 11.500 0 0 1 22 6.300H12z" fill="#e33b2e"/><path d="M2 6.300A11.500 11.500 0 0 0 11 23.500L17 15l-10 0z" fill="#2fa350"/><circle cx="12" cy="12" r="5.500" fill="#fff"/><circle cx="12" cy="12" r="4.300" fill="#4285f4"/></svg>Upload - Yo...</button>
  <button class="justify-content-center pe-1" aria-label="Snipping tool"><svg width="24" height="26" viewBox="0 0 24 26" fill="none"><ellipse cx="12" cy="9" rx="9.500" ry="7" fill="#f5eef1" stroke="#cc8c9a" stroke-width="1.500"/><path d="M5 5l13 14M17 5l-6 12" stroke="#8a8f99" stroke-width="1.500"/><ellipse cx="19.500" cy="19" rx="1.500" ry="3.500" transform="rotate(-45 19.500 19)" stroke="#2f75b5" stroke-width="1.500"/><ellipse cx="12" cy="21" rx="1.500" ry="3.500" transform="rotate(15 12 21)" stroke="#2f75b5" stroke-width="1.500"/></svg></button>
  <button class="task"><svg><use href="#corel"/></svg>CorelDRAW ...</button>
  <i></i>
  <button class="task on"><svg><use href="#corel"/></svg>CorelDRAW ...</button>
  <i></i>
  <button class="task"><svg viewBox="0 0 24 24"><path d="M1 1h22v22H1z" fill="#fff"/><path d="M17 5H10Q7.500 5 7.500 8t2.500 3h4q2.500 0 2.500 3T14 17.500H7" fill="none" stroke="#173657" stroke-width="3.500"/><circle cx="19" cy="18.500" r="5.500" fill="#e8443d"/></svg>TechSmith S...</button>
  <i></i>
  <div class="tray">
    <svg viewBox="0 0 14 14"><path d="M1 1h12v12H1z" fill="#1d6a9c"/><path d="M10 3.500H5v3h4v4H4" fill="none" stroke="#fff" stroke-width="2"/><circle cx="11" cy="3" r="2.500" fill="#cfd8dd"/></svg>
    <svg viewBox="0 0 14 14"><path d="M2 1v12" stroke="#fff"/><path d="M3 2h7v6H3z" fill="#fff"/><path d="M7 7h6v6H7z" fill="#d8383a"/><path d="M8 8l4 4M12 8l-4 4" stroke="#fff"/></svg>
    <svg viewBox="0 0 14 14"><path d="M1 5h2l4-4v12L3 9H1z" fill="#fff"/><path d="M9 4q2 3 0 6M11 2.500q3 4.500 0 9" fill="none" stroke="#cde"/></svg>
    <svg viewBox="0 0 14 14"><path d="M1 1h12v12H1z" fill="#1f86b8"/><path d="M10 3.500H5v3h4v4H4" fill="none" stroke="#fff" stroke-width="2"/></svg>
    <svg viewBox="0 0 14 14"><path d="M1 1h12v12H1z" fill="#c3202b"/><path d="M3 11q5-4 4-8-1 5 5 5-5 0-9 3z" fill="none" stroke="#fff"/></svg>
    <svg viewBox="0 0 14 14"><path d="M2 3h9v9H2z" fill="#8fcbe8"/><path d="M1 11Q4 3 13 3M5 5h5v5H5z" fill="none" stroke="#efc14a" stroke-width="1.400"/></svg>
    <svg viewBox="0 0 14 14"><path d="M1 2h12v8H1z" fill="#b7b5d3"/><path d="M1 2h12v8H1zM2 12.500h11" fill="none" stroke="#eee"/></svg>
    <svg viewBox="0 0 14 14"><path d="M3.500 4l6 6L7 12.500v-11L9.500 4l-6 6" fill="none" stroke="#fff" stroke-width="1.300"/></svg>
    <svg viewBox="0 0 14 14"><path d="M1 2h12v8H1z" fill="#1a1d25"/><path d="M3 7l3-3 3 2 3-3M5 12h6" fill="none" stroke="#c8d6e4"/></svg>
    <svg viewBox="0 0 14 14"><path d="M0 6l7-2 4 4-5 2z" fill="#99a"/><circle cx="10" cy="9.500" r="3.500" fill="#3dad4b"/><path d="M8.500 9.500l1 1 2-2.500" fill="none" stroke="#fff"/></svg>
    <svg viewBox="0 0 14 14"><path d="M2 3h5v10H2zM3.500 1.500h2M11 5v8M9 2v4h4V2" fill="none" stroke="#fff" stroke-width="1.500"/></svg>
  </div>
  <div class="clock">6:39 PM<br>9/21/2019</div>
  <button class="show-desk" aria-label="Show desktop"></button>
</div>

<script src="https://cdn.jsdelivr.net/npm/bootstrap@5.3.0/dist/js/bootstrap.bundle.min.js"></script>
<script>
  // One inch on the rulers at the current zoom level, in pixels
  const INCH = 1155 / 36;
  let h = '', v = '';
  for (let i = -1; i <= 74; i++) {
    const x = Math.round(48 + i * INCH / 2) + 0.5;
    const major = i % 4 === 0;
    h += `<path d="M${x} ${major ? 8 : i % 2 ? 10 : 9}V11"/>`;
    if (major && i >= 0) h += `<text class="ruler-num" text-anchor="middle" x="${x}" y="6">${i / 2}</text>`;
  }
  h += '<text class="ruler-num" x="1221" y="6">inches</text><path d="M854.5 0V11" stroke="#111" stroke-dasharray="2 1"/>';
  for (let i = 17; i <= 47; i++) {
    const y = Math.round(61 + (44 - i) * INCH / 2) + 0.5;
    const major = i % 4 === 0;
    v += `<path d="M${major ? 8 : i % 2 ? 10 : 9} ${y}H11"/>`;
    if (major) v += `<text class="ruler-num" text-anchor="middle" transform="translate(7 ${y}) rotate(-90)">${i / 2}</text>`;
  }
  v += '<path d="M0 428.5H11" stroke="#111" stroke-dasharray="2 1"/>';
  document.getElementById('hr').insertAdjacentHTML('beforeend', h);
  document.getElementById('vr').insertAdjacentHTML('beforeend', v);

  const colors = ['#000','#1a1a1a','#333','#4d4d4d','#666','#808080','#999','#b3b3b3','#ccc','#e6e6e6','#fff','#00f','#0ff','#0f0','#ff0','#f00','#f0f','#90c','#f60','#f9c','#633','#ccf','#99f','#69f','#66f','#66c','#039','#006','#369','#0cf','#9ff','#9cc','#699','#366'];
  document.getElementById('swatches').innerHTML =
    colors.map(c => `<i class="swatch" style="background:${c}"></i>`).join('');
</script>
</body>
</html>
